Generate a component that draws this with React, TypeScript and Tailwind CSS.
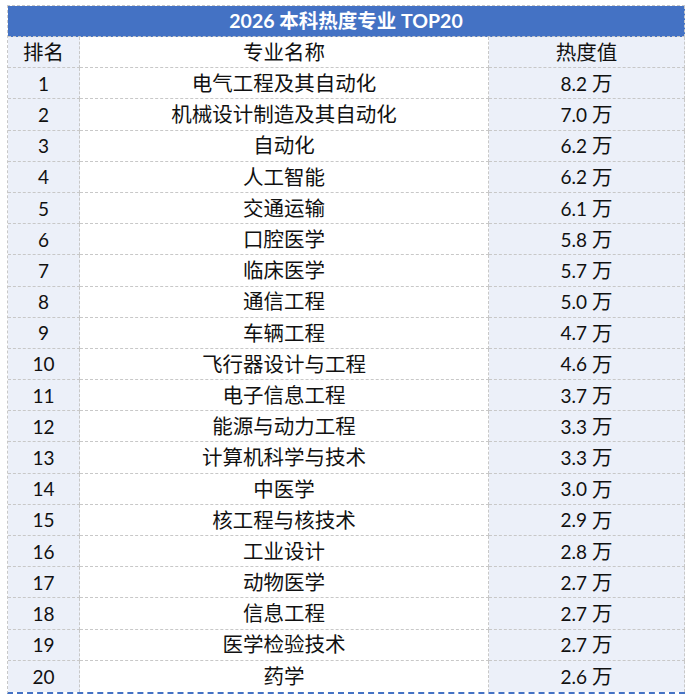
const rows: [string, string, string][] = [
  ['1', '电气工程及其自动化', '8.2'],
  ['2', '机械设计制造及其自动化', '7.0'],
  ['3', '自动化', '6.2'],
  ['4', '人工智能', '6.2'],
  ['5', '交通运输', '6.1'],
  ['6', '口腔医学', '5.8'],
  ['7', '临床医学', '5.7'],
  ['8', '通信工程', '5.0'],
  ['9', '车辆工程', '4.7'],
  ['10', '飞行器设计与工程', '4.6'],
  ['11', '电子信息工程', '3.7'],
  ['12', '能源与动力工程', '3.3'],
  ['13', '计算机科学与技术', '3.3'],
  ['14', '中医学', '3.0'],
  ['15', '核工程与核技术', '2.9'],
  ['16', '工业设计', '2.8'],
  ['17', '动物医学', '2.7'],
  ['18', '信息工程', '2.7'],
  ['19', '医学检验技术', '2.7'],
  ['20', '药学', '2.6'],
];

const cell = 'flex items-center justify-center overflow-hidden leading-none border-r border-b border-dashed border-[#c8c8c8]';

export default function App() {
  return (
    <div className="w-[688px] h-[700px] bg-white pt-[5px] pl-[7px]" style={{ fontFamily: 'Lato, "Noto Sans CJK SC", sans-serif' }}>
      <div className="w-[678px] h-[689px] flex flex-col border-l border-t border-dashed border-[#c8c8c8] border-b-2 border-b-solid border-b-[#4472c4] text-[#111] text-[19px]">
        <div className="h-[31px] shrink-0 bg-[#4472c4] text-white font-bold flex items-center justify-center border-r border-b border-dashed border-[#c8c8c8] text-[19.5px] leading-none">
          2026 本科热度专业 TOP20
        </div>
        <div className="flex-1 min-h-0 grid grid-cols-[72px_409px_1fr] grid-rows-[repeat(21,minmax(0,1fr))]">
          <div className={`${cell} bg-[#ecf0f9] text-[20.5px]`}>排名</div>
          <div className={`${cell} text-[20.5px]`}>专业名称</div>
          <div className={`${cell} bg-[#ecf0f9] text-[20.5px]`}>热度值</div>
          {rows.map(([rank, name, value], i) => (
            <div key={rank} className="contents">
              <div className={`${cell} bg-[#ecf0f9] ${i === rows.length - 1 ? 'border-b-0' : ''}`}>{rank}</div>
              <div className={`${cell} text-[20.5px] ${i === rows.length - 1 ? 'border-b-0' : ''}`}>{name}</div>
              <div className={`${cell} bg-[#ecf0f9] ${i === rows.length - 1 ? 'border-b-0' : ''}`}>
                {value}&nbsp;<span className="text-[20.5px]">万</span>
              </div>
            </div>
          ))}
        </div>
      </div>
    </div>
  );
}
